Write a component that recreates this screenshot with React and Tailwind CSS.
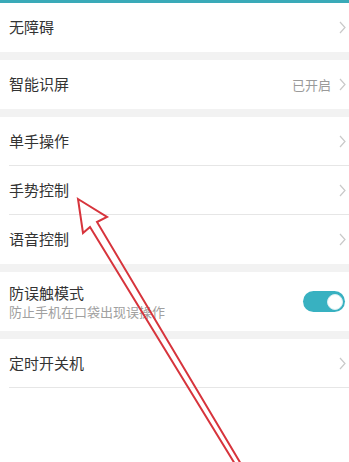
import React from 'react';

const FONT = { fontFamily: '"Noto Sans CJK SC", "Noto Sans", sans-serif' };

function Chevron() {
  return (
    <svg width="7" height="13" viewBox="0 0 7 13" className="shrink-0">
      <polyline points="1,1 6,6.5 1,12" fill="none" stroke="#c9c9c9" strokeWidth="1.2" />
    </svg>
  );
}

function Row({ label, value, divider = false }) {
  return (
    <div className="relative flex h-[49px] items-center justify-between pl-[9px] pr-[3px]">
      <span className="text-[15px] text-[#333333]">{label}</span>
      <div className="flex items-center gap-[8px]">
        {value && <span className="text-[13px] text-[#9a9a9a]">{value}</span>}
        <Chevron />
      </div>
      {divider && <div className="absolute bottom-0 left-[9px] right-0 h-px bg-[#e6e6e6]" />}
    </div>
  );
}

function Gap() {
  return <div className="h-[8px] bg-[#f2f2f2]" />;
}

function Toggle() {
  return (
    <div className="flex h-[21px] w-[42px] items-center justify-end rounded-full bg-[#38b1c1] pr-[2px]">
      <div className="h-[16px] w-[16px] rounded-full border border-[#d8eef1] bg-white" />
    </div>
  );
}

export default function App() {
  return (
    <div className="relative min-h-[462px] overflow-hidden bg-white" style={FONT}>
      <div className="h-[3px] bg-[#3aaab8]" />
      <Row label="无障碍" />
      <Gap />
      <Row label="智能识屏" value="已开启" />
      <Gap />
      <Row label="单手操作" divider />
      <Row label="手势控制" divider />
      <Row label="语音控制" />
      <Gap />
      <div className="flex h-[59px] items-center justify-between pl-[9px] pr-[4px]">
        <div className="flex flex-col">
          <span className="text-[15px] leading-[20px] text-[#333333]">防误触模式</span>
          <span className="text-[13px] leading-[18px] text-[#a0a0a0]">防止手机在口袋出现误操作</span>
        </div>
        <Toggle />
      </div>
      <Gap />
      <Row label="定时开关机" divider />

      {/* red annotation arrow */}
      <svg className="pointer-events-none absolute left-0 top-0" width="349" height="462" viewBox="0 0 349 462">
        <path
          d="M78 199 L107 217 L97 222 L241 464 L235 464 L90 227 L83 233 Z"
          fill="none"
          stroke="#d7343c"
          strokeWidth="2"
          strokeLinejoin="miter"
        />
      </svg>
    </div>
  );
}
